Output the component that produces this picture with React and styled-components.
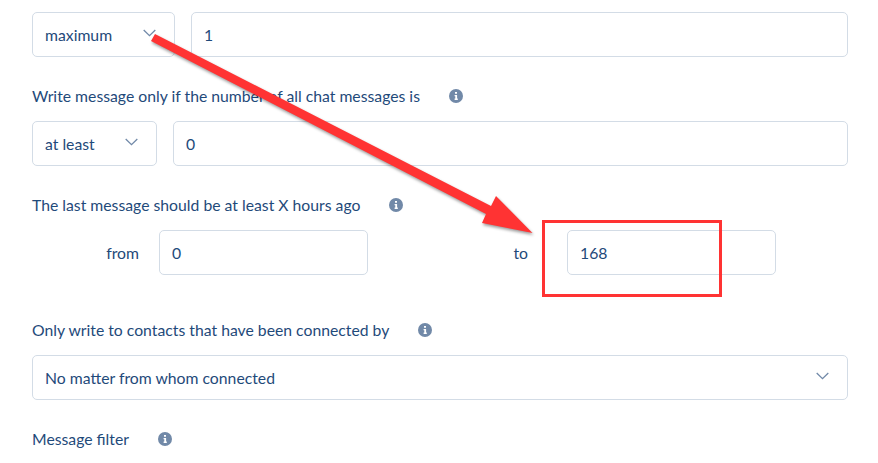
import React from 'react';
import styled, { createGlobalStyle } from 'styled-components';

const GlobalStyle = createGlobalStyle`
    html, body {
        margin: 0;
        padding: 0;
        background: #fff;
        overflow: hidden;
    }
`;

const Chevron = () => (
    <ChevronIcon viewBox="0 0 13 8" aria-hidden="true">
        <path d="M.7 1l5.800 5.600L12.300 1" fill="none" stroke="#7189a8" strokeWidth="1.3" />
    </ChevronIcon>
);

const Info = () => (
    <InfoIcon viewBox="0 0 14 14" aria-hidden="true">
        <circle cx="7" cy="7" r="7" fill="#7189a8" />
        <path d="M6 3h2v1.8H6zM5.600 6h2.500v3.600h.7V11H5.600V9.600h.7V7.300h-.7z" fill="#fff" />
    </InfoIcon>
);

export default function App() {
    return (
        <Page>
            <GlobalStyle />
            <Row>
                <Select $width={143}>maximum<Chevron /></Select>
                <Input defaultValue="1" />
            </Row>

            <Group>
                <Label>Write message only if the number of all chat messages is<Info /></Label>
                <Row>
                    <Select $width={125}>at least<Chevron /></Select>
                    <Input defaultValue="0" />
                </Row>
            </Group>

            <Group>
                <Label>The last message should be at least X hours ago<Info /></Label>
                <RangeRow>
                    <RangeLabel $gap={20}>from</RangeLabel>
                    <Input defaultValue="0" />
                    <RangeLabel $gap={39}>to</RangeLabel>
                    <Input defaultValue="168" />
                </RangeRow>
            </Group>

            <Group $top={44}>
                <Label>Only write to contacts that have been connected by<Info /></Label>
                <Row>
                    <Select>No matter from whom connected<Chevron /></Select>
                </Row>
            </Group>

            <Group>
                <Label>Message filter<Info /></Label>
            </Group>

            <Arrow viewBox="0 0 878 463" aria-hidden="true">
                <path d="M155 34L491 206L496 196L532.500 233L482 223L486 214L151 41Z" fill="#ff3333" />
            </Arrow>
            <Highlight />
        </Page>
    );
}

const Page = styled.div`
    position: relative;
    width: 878px;
    height: 463px;
    box-sizing: border-box;
    padding: 12px 30px 0 32px;
    overflow: hidden;
    font-family: Lato, "Open Sans", sans-serif;
    font-size: 15.75px;
    color: #1f4a7a;
`;

const Row = styled.div`
    display: flex;
    gap: 16px;
`;

const Group = styled.div`
    display: flex;
    flex-direction: column;
    gap: 14px;
    margin-top: ${(props) => props.$top || 28}px;
`;

const Label = styled.div`
    display: flex;
    align-items: center;
    gap: 29px;
    height: 22px;
    line-height: 22px;
`;

const Select = styled.div`
    display: flex;
    flex: ${(props) => (props.$width ? `0 0 ${props.$width}px` : '1')};
    align-items: center;
    justify-content: space-between;
    height: 45px;
    box-sizing: border-box;
    padding: 0 18px 0 12px;
    background: #fff;
    border: 1px solid #d3dce6;
    border-radius: 5px;
`;

const Input = styled.input`
    flex: 1;
    min-width: 0;
    height: 45px;
    box-sizing: border-box;
    padding: 0 12px;
    border: 1px solid #d3dce6;
    border-radius: 5px;
    outline: none;
    background: #fff;
    font: inherit;
    color: inherit;
`;

const RangeRow = styled.div`
    display: grid;
    grid-template-columns: 127px 209px 199px 209px;
    align-items: center;
`;

const RangeLabel = styled.span`
    padding-right: ${(props) => props.$gap}px;
    text-align: right;
`;

const ChevronIcon = styled.svg`
    width: 13px;
    height: 8px;
    flex: none;
    margin-top: -3px;
`;

const InfoIcon = styled.svg`
    width: 14px;
    height: 14px;
    flex: none;
`;

const Arrow = styled.svg`
    position: absolute;
    top: 0;
    left: 0;
    width: 878px;
    height: 463px;
    pointer-events: none;
    filter: drop-shadow(1px 2px 1.5px rgba(0, 0, 0, 0.4));
`;

const Highlight = styled.div`
    position: absolute;
    top: 220px;
    left: 542px;
    width: 180px;
    height: 77px;
    box-sizing: border-box;
    border: 3px solid #ff3333;
`;
